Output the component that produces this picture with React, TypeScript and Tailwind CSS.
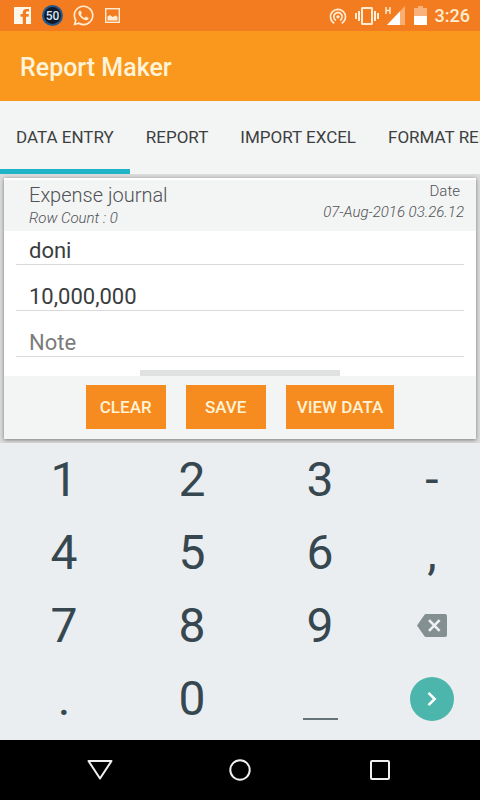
import { useState } from "react";
import { FaWhatsapp } from "react-icons/fa";
import { MdWifiTethering, MdVibration } from "react-icons/md";

function StatusBar() {
  return (
    <div className="flex h-[31px] items-center justify-between bg-[#f47c20] pl-[14px] pr-[10px] text-[#ffecd2]">
      <div className="flex items-center">
        <svg className="h-[17px] w-[17px]" viewBox="0 0 17 17" role="img" aria-label="Facebook">
          <path fill="#fff6ea" d="M0 0h17v17h-5v-7.300h2.500l.4-2.700H12V5.800c0-.8.400-1.300 1.400-1.300H15V2h-2.500C10 2 8.800 3.400 8.800 5.400V7H6.600v2.700h2.200V17H0z" />
        </svg>
        <div className="ml-[11px] flex h-[21px] w-[21px] items-center justify-center rounded-full border-2 border-[#24598c] bg-[#101a2b] text-[12px] leading-none font-medium text-[#d5e6f7]">
          50
        </div>
        <FaWhatsapp className="ml-[9px] h-[23px] w-[23px]" />
        <svg className="ml-[10px] h-[15px] w-[15px]" viewBox="0 0 15 15" role="img" aria-label="Picture">
          <rect x="0.700" y="0.700" width="13.600" height="13.600" fill="none" stroke="currentColor" strokeWidth="1.400" />
          <path fill="currentColor" d="M2.500 12.500V8.500L5 7l2.500 2 3.200-1.500 1.800 1.500v3.500z" />
        </svg>
      </div>
      <div className="flex items-center">
        <MdWifiTethering className="h-[20px] w-[20px]" />
        <MdVibration className="ml-[7px] h-6 w-6" />
        <svg className="ml-[6px] h-[19px] w-[20px]" viewBox="0 0 20 19" role="img" aria-label="Signal">
          <path fill="none" stroke="currentColor" strokeWidth="1.400" d="M1 1v7M5 1v7M1 4.500h4" />
          <path fill="#f9ae72" d="M20 0v19H2z" />
          <path fill="#fff" d="M15 5.200V19H2z" />
        </svg>
        <svg className="ml-[9px] h-[19px] w-[13px]" viewBox="0 0 13 19" role="img" aria-label="Battery">
          <path fill="#f9b27c" d="M4 0h5v2h4v8H0V2h4z" />
          <path fill="#fff" d="M0 10h13v9H0z" />
        </svg>
        <span className="ml-2 text-[18px] leading-5 font-medium">3:26</span>
      </div>
    </div>
  );
}

const tabs = ["DATA ENTRY", "REPORT", "IMPORT EXCEL", "FORMAT REPORT"];

function Tabs() {
  const [active, setActive] = useState(0);
  return (
    <nav className="flex h-[73px] overflow-hidden bg-[#f3f5f5]">
      {tabs.map((name, i) => (
        <button
          key={name}
          type="button"
          onClick={() => setActive(i)}
          className={`shrink-0 border-b-[5px] px-4 pt-[6px] text-[17px] whitespace-nowrap text-[#3d3f40] ${
            i === active ? "border-[#20b4c8]" : "border-transparent"
          }`}
        >
          {name}
        </button>
      ))}
    </nav>
  );
}

const fieldClass =
  "block h-[34px] w-full border-b border-[#d9d9d9] bg-transparent px-[13px] pt-[5px] text-[22px] leading-7 text-[#3a3c3e] outline-none placeholder:text-[#7b7b7b] placeholder:opacity-100";

const actionClass =
  "flex h-11 items-center justify-center bg-[#f68b1f] pt-[2px] text-[17px] font-medium text-[#fff3d6]";

function EntryCard() {
  return (
    <main className="bg-[#dcdcdc] px-1 pt-1 pb-1">
      <form
        className="bg-white shadow-[0_1px_4px_rgba(0,0,0,0.45)]"
        onSubmit={(e) => e.preventDefault()}
      >
        <header className="flex h-[53px] justify-between border-t-2 border-white bg-[#f3f4f4] pr-3 pl-[25px] text-[#505254]">
          <div>
            <h2 className="pt-[3px] text-[20px] leading-6 font-light">Expense journal</h2>
            <p className="text-[15px] leading-[22px] font-light italic">Row Count : 0</p>
          </div>
          <div className="text-right">
            <p className="pr-1 text-[15px] leading-[22px] font-light">Date</p>
            <p className="text-[15px] leading-5 font-light italic">07-Aug-2016 03.26.12</p>
          </div>
        </header>
        <div className="flex flex-col gap-3 px-3">
          <input aria-label="Name" defaultValue="doni" className={fieldClass} />
          <input aria-label="Amount" defaultValue="10,000,000" className={fieldClass} />
          <input aria-label="Note" placeholder="Note" className={fieldClass} />
        </div>
        <div className="mx-auto mt-[13px] h-[6px] w-[200px] bg-[#e0e2e2]" />
        <div className="flex h-[63px] justify-center gap-5 bg-[#f3f5f5] pt-[9px]">
          <button type="reset" className={`${actionClass} w-20`}>CLEAR</button>
          <button type="submit" className={`${actionClass} w-20`}>SAVE</button>
          <button type="button" className={`${actionClass} px-[11px]`}>VIEW DATA</button>
        </div>
      </form>
    </main>
  );
}

const keyClass = "flex h-[73px] items-center justify-center text-[48px] leading-none text-[#37474f]";

function Keypad() {
  const rows = [
    ["1", "2", "3", "-"],
    ["4", "5", "6", ","],
    ["7", "8", "9"],
  ];
  return (
    <section aria-label="Keypad" className="grid grid-cols-[4fr_4fr_4fr_3fr] bg-[#eaeef1] pb-[5px]">
      {rows.flat().map((key) => (
        <button key={key} type="button" className={keyClass}>
          {key}
        </button>
      ))}
      <button type="button" aria-label="Delete" className={keyClass}>
        <svg className="h-[23px] w-[30px]" viewBox="0 0 30 23">
          <path fill="#848f92" d="M9 0h19a2 2 0 0 1 2 2v19a2 2 0 0 1-2 2H9a2 2 0 0 1-1.700-1L0 11.500 7.300 1A2 2 0 0 1 9 0z" />
          <path fill="none" stroke="#eef2f4" strokeWidth="2.600" d="M12 6.200l10.600 10.600M22.600 6.200L12 16.800" />
        </svg>
      </button>
      <button type="button" className={keyClass}>.</button>
      <button type="button" className={keyClass}>0</button>
      <button type="button" aria-label="Space" className={keyClass}>
        <span className="mt-10 h-[2px] w-[35px] bg-[#66737a]" />
      </button>
      <button type="button" aria-label="Next" className={keyClass}>
        <span className="flex h-11 w-11 items-center justify-center rounded-full bg-[#4db6ac]">
          <svg className="h-4 w-[10px]" viewBox="0 0 10 16">
            <path fill="none" stroke="#fff" strokeWidth="2.500" d="M1.500 1.800L7.700 8l-6.200 6.200" />
          </svg>
        </span>
      </button>
    </section>
  );
}

function NavBar() {
  return (
    <footer className="flex h-[60px] items-center justify-center gap-[100px] bg-black">
      <button type="button" aria-label="Back" className="flex w-10 justify-center">
        <svg className="h-[22px] w-[26px]" viewBox="0 0 26 22">
          <path fill="none" stroke="#f0f0f0" strokeWidth="2" strokeLinejoin="round" d="M1.500 2h23L13 19.500z" />
        </svg>
      </button>
      <button type="button" aria-label="Home" className="flex w-10 justify-center">
        <svg className="h-[22px] w-[22px]" viewBox="0 0 22 22">
          <circle cx="11" cy="11" r="9.700" fill="none" stroke="#f0f0f0" strokeWidth="2" />
        </svg>
      </button>
      <button type="button" aria-label="Recent apps" className="flex w-10 justify-center">
        <svg className="h-[20px] w-[20px]" viewBox="0 0 20 20">
          <rect x="1" y="1" width="18" height="18" rx="1" fill="none" stroke="#f0f0f0" strokeWidth="2" />
        </svg>
      </button>
    </footer>
  );
}

export default function App() {
  return (
    <div className="flex min-h-screen flex-col bg-black font-['Roboto',sans-serif]">
      <StatusBar />
      <header className="flex h-[70px] items-center bg-[#f9981d] px-5 pt-1">
        <h1 className="text-[25px] leading-8 font-medium text-[#fff3d8]">Report Maker</h1>
      </header>
      <Tabs />
      <EntryCard />
      <Keypad />
      <NavBar />
    </div>
  );
}
